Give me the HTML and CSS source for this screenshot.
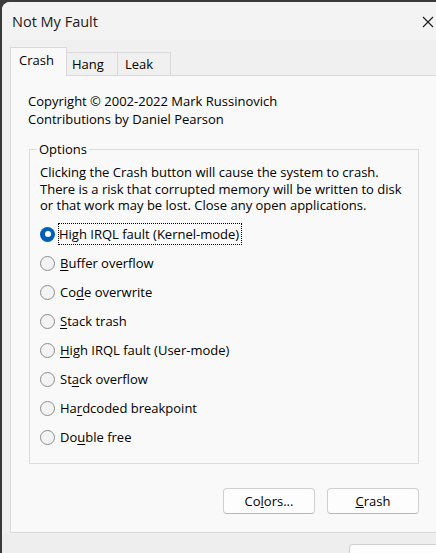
FILE: index.html
```html
<!DOCTYPE html>
<html lang="en">
<head>
    <meta charset="UTF-8">
    <meta name="viewport" content="width=device-width, initial-scale=1.0">
    <title>Not My Fault</title>
    <link rel="stylesheet" href="styles.css">
</head>
<body>

<div class="window">
    <!-- Title bar -->
    <div class="titlebar">
        <span class="title">Not My Fault</span>
        <svg class="close" width="12" height="12" viewBox="0 0 12 12">
            <path d="M1 1 L11 11 M11 1 L1 11" stroke="#1a1a1a" stroke-width="1.1" fill="none"/>
        </svg>
    </div>

    <div class="content">
        <!-- Tabs -->
        <div class="tabs">
            <div class="tab active">Crash</div>
            <div class="tab">Hang</div>
            <div class="tab">Leak</div>
        </div>

        <div class="panel">
            <p class="credit">Copyright &copy; 2002-2022 Mark Russinovich</p>
            <p class="credit">Contributions by Daniel Pearson</p>

            <fieldset class="options">
                <legend>Options</legend>
                <p class="warning">Clicking the Crash button will cause the system to crash. There is a risk that corrupted memory will be written to disk or that work may be lost. Close any open applications.</p>

                <div class="radio checked"><span class="dot"></span><span class="label focus">High IRQL fault (Kernel-mode)</span></div>
                <div class="radio"><span class="dot"></span><span class="label"><u>B</u>uffer overflow</span></div>
                <div class="radio"><span class="dot"></span><span class="label">Co<u>d</u>e overwrite</span></div>
                <div class="radio"><span class="dot"></span><span class="label"><u>S</u>tack trash</span></div>
                <div class="radio"><span class="dot"></span><span class="label"><u>H</u>igh IRQL fault (User-mode)</span></div>
                <div class="radio"><span class="dot"></span><span class="label">St<u>a</u>ck overflow</span></div>
                <div class="radio"><span class="dot"></span><span class="label">Ha<u>r</u>dcoded breakpoint</span></div>
                <div class="radio"><span class="dot"></span><span class="label">Do<u>u</u>ble free</span></div>
            </fieldset>

            <div class="buttons">
                <button type="button">Co<u>l</u>ors...</button>
                <button type="button"><u>C</u>rash</button>
            </div>
        </div>

        <div class="footer">
            <button type="button" class="cut">Help</button>
        </div>
    </div>
</div>

</body>
</html>
```

FILE: styles.css
```css
body {
    margin: 0;
    background-color: #3a3a3a;
    overflow: hidden;
    font-family: "Open Sans", "Noto Sans", sans-serif;
    color: #000;
}
.window {
    margin: 2px 0 0 2px;
    width: 460px;
    height: 560px;
    background-color: #eeeeee;
    border-top-left-radius: 8px;
    overflow: hidden;
}
.titlebar {
    height: 38px;
    background-color: #f3f3f3;
    display: flex;
    align-items: center;
    padding: 0 0 0 10px;
}
.title {
    font-size: 14.5px;
    color: #1a1a1a;
    flex: 1;
}
.close {
    margin-right: 28px;
    margin-top: 2px;
}
.content {
    padding: 8px 0 0 8px;
    background-color: #f0f0f0;
}
.tabs {
    display: flex;
    align-items: flex-end;
    height: 27px;
    font-size: 13px;
}
.tab {
    height: 22px;
    line-height: 22px;
    padding: 0 5px;
    border: 1px solid #d9d9d9;
    border-bottom: none;
    background-color: #f0f0f0;
    margin-left: -1px;
}
.tab:first-child {
    margin-left: 0;
}
.tab:nth-child(2) {
    width: 40px;
}
.tab:nth-child(3) {
    width: 40px;
    padding-left: 7px;
}
.tab.active {
    height: 28px;
    line-height: 25px;
    width: 47px;
    padding: 0 0 0 8px;
    background-color: #f9f9f9;
    position: relative;
    z-index: 1;
    margin-bottom: -1px;
}
.panel {
    width: 440px;
    height: 458px;
    border: 1px solid #d9d9d9;
    background-color: #f9f9f9;
    padding: 16px 0 0 17px;
    box-sizing: border-box;
    font-size: 13px;
}
.credit {
    margin: 0;
    line-height: 18px;
}
.options {
    width: 390px;
    box-sizing: border-box;
    margin: 13px 0 0 1px;
    padding: 0 10px 11px 10px;
    border: 1px solid #dcdcdc;
    height: 323px;
}
.options legend {
    padding: 0 2px;
    margin-left: -3px;
    line-height: 16px;
}
.warning {
    margin: 7px 0 6px 0;
    line-height: 16.5px;
}
.radio {
    display: flex;
    align-items: center;
    height: 29px;
}
.dot {
    width: 13px;
    height: 13px;
    border: 1px solid #8c8c8c;
    border-radius: 50%;
    background-color: #f3f3f3;
    margin: 0 5px 0 0;
    flex-shrink: 0;
}
.radio.checked .dot {
    width: 15px;
    height: 15px;
    border: none;
    background-color: #005fb8;
    display: flex;
    align-items: center;
    justify-content: center;
}
.radio.checked .dot::after {
    content: "";
    width: 6px;
    height: 6px;
    border-radius: 50%;
    background-color: #fff;
}
.label u {
    text-decoration-thickness: 1px;
    text-underline-offset: 2px;
}
.label.focus {
    outline: 1px dotted #000;
    padding: 1px 2px 1px 0;
    margin-left: -1px;
}
.buttons {
    width: 390px;
    display: flex;
    justify-content: flex-end;
    gap: 12px;
    margin: 24px 0 0 1px;
}
button {
    width: 92px;
    height: 26px;
    font-family: inherit;
    font-size: 13px;
    background-color: #fdfdfd;
    border: 1px solid #d0d0d0;
    border-bottom-color: #b8b8b8;
    border-radius: 4px;
    color: #000;
    padding: 0;
}
.footer {
    height: 40px;
    background-color: #eeeeee;
    margin-left: -8px;
    padding: 11px 0 0 347px;
    box-sizing: border-box;
}
.cut {
    height: 30px;
    width: 92px;
    vertical-align: top;
}
```
